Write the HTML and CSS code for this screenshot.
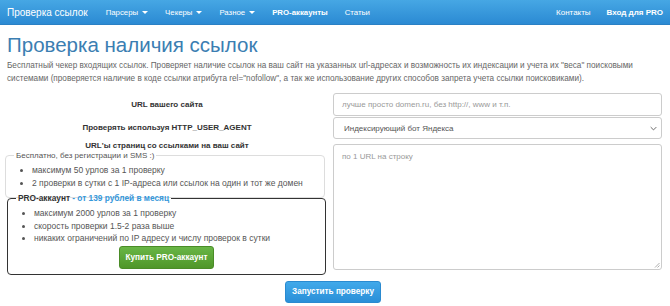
FILE: index.html
```html
<!DOCTYPE html>
<html lang="ru">
<head>
<meta charset="utf-8">
<link rel="stylesheet" href="styles.css">
</head>
<body>
<nav class="navbar">
  <div class="nav-left">
    <span class="brand">Проверка ссылок</span>
    <span class="nav-item">Парсеры <span class="caret"></span></span>
    <span class="nav-item">Чекеры <span class="caret"></span></span>
    <span class="nav-item">Разное <span class="caret"></span></span>
    <span class="nav-item bold">PRO-аккаунты</span>
    <span class="nav-item">Статьи</span>
  </div>
  <div class="nav-right">
    <span class="nav-item">Контакты</span>
    <span class="nav-item bold">Вход для PRO</span>
  </div>
</nav>
<main class="page">
  <h1 class="title">Проверка наличия ссылок</h1>
  <p class="lead">Бесплатный чекер входящих ссылок. Проверяет наличие ссылок на ваш сайт на указанных url-адресах и возможность их индексации и учета их "веса" поисковыми системами (проверяется наличие в коде ссылки атрибута rel="nofollow", а так же использование других способов запрета учета ссылки поисковиками).</p>
  <form class="form">
    <label class="lbl">URL вашего сайта</label>
    <div class="input placeholder">лучше просто domen.ru, без http://, www и т.п.</div>
    <label class="lbl">Проверять используя HTTP_USER_AGENT</label>
    <div class="input select"><span>Индексирующий бот Яндекса</span><svg class="chev" viewBox="0 0 10 6" width="7" height="5"><path d="M1 1l4 4 4-4" fill="none" stroke="#666" stroke-width="1.4"/></svg></div>
    <div class="left-stack">
      <label class="lbl lbl3">URL'ы страниц со ссылками на ваш сайт</label>
      <fieldset class="box free">
        <legend>Бесплатно, без регистрации и SMS :)</legend>
        <ul>
          <li>максимум 50 урлов за 1 проверку</li>
          <li>2 проверки в сутки с 1 IP-адреса или ссылок на один и тот же домен</li>
        </ul>
      </fieldset>
      <fieldset class="box pro">
        <legend><b>PRO-аккаунт</b> <b class="price">- от 139 рублей в месяц</b></legend>
        <ul>
          <li>максимум 2000 урлов за 1 проверку</li>
          <li>скорость проверки 1.5-2 раза выше</li>
          <li>никаких ограничений по IP адресу и числу проверок в сутки</li>
        </ul>
        <div class="center"><span class="btn green">Купить PRO-аккаунт</span></div>
      </fieldset>
    </div>
    <div class="textarea placeholder">по 1 URL на строку<svg class="grip" viewBox="0 0 6 6" width="6" height="6"><path d="M5.5 1L1 5.5M5.5 3.5L3.5 5.5" stroke="#999" stroke-width="0.8"/></svg></div>
  </form>
  <div class="submit"><span class="btn blue">Запустить проверку</span></div>
</main>
</body>
</html>
```
FILE: styles.css
```css
* { box-sizing: border-box; }
body {
  margin: 0;
  font-family: "Liberation Sans", Arial, sans-serif;
  background: #fff;
  color: #333;
}
.navbar {
  height: 25px;
  background: linear-gradient(#46a7e4, #2b8ad3);
  border-bottom: 1px solid #2a80c4;
  display: flex;
  justify-content: space-between;
  align-items: center;
  padding: 0 7px;
  color: #fff;
}
.nav-left, .nav-right { display: flex; align-items: center; }
.brand { font-size: 10px; margin-right: 18px; }
.nav-item { font-size: 7.8px; margin-right: 17px; display: flex; align-items: center; }
.nav-right .nav-item { margin-right: 0; margin-left: 16px; font-size: 8px; }
.bold { font-weight: bold; }
.caret {
  display: inline-block;
  width: 0; height: 0;
  margin-left: 4px;
  border-left: 3px solid transparent;
  border-right: 3px solid transparent;
  border-top: 3px solid #fff;
}
.page { padding: 0 8px 0 4px; }
.title {
  margin: 7px 0 0 3px;
  font-size: 20.5px;
  font-weight: normal;
  color: #3b7eb2;
  line-height: 26px;
}
.lead {
  margin: 1px 0 0 3px;
  font-size: 8.2px;
  line-height: 13px;
  color: #666;
}
.form {
  display: grid;
  grid-template-columns: 326px 1fr;
  column-gap: 3px;
  margin-top: 8px;
}
.lbl {
  font-size: 8px;
  font-weight: bold;
  color: #333;
  text-align: center;
  display: flex;
  align-items: center;
  justify-content: center;
  height: 23px;
}
.input {
  height: 23px;
  border: 1px solid #ccc;
  border-radius: 3px;
  font-size: 8px;
  padding: 0 8px;
  display: flex;
  align-items: center;
}
.placeholder { color: #999; }
.select {
  margin-top: 1px;
  height: 22px;
  color: #555;
  justify-content: space-between;
  padding-left: 10px;
  padding-right: 4px;
}
.left-stack { display: flex; flex-direction: column; }
.lbl3 { height: 12px; }
.textarea {
  margin-top: 5px;
  height: 126px;
  border: 1px solid #ccc;
  border-radius: 3px;
  font-size: 8px;
  padding: 7px 8px;
  position: relative;
}
.grip { position: absolute; right: 1px; bottom: 1px; }
.box {
  margin: 0;
  border-radius: 4px;
  padding: 0 8px 4px;
}
.box legend {
  font-size: 8px;
  padding: 0 2px;
  color: #555;
  line-height: 9px;
}
.free { border: 1px solid #ddd; margin: 0 5px 0 1px; padding-bottom: 8px; }
.pro { border: 1px solid #333; margin: -4px 4px 0 3px; padding-bottom: 5px; }
.pro legend { color: #333; font-size: 8.3px; }
.price { color: #3598db; }
.box ul {
  margin: 4px 0 0;
  padding-left: 18px;
  font-size: 8.5px;
  line-height: 12.5px;
  color: #555;
}
.center { display: flex; justify-content: center; margin-top: 1px; }
.btn {
  display: inline-flex;
  align-items: center;
  justify-content: center;
  height: 23px;
  border-radius: 3px;
  color: #fff;
  font-weight: bold;
  font-size: 8.2px;
}
.green {
  width: 95px;
  background: linear-gradient(#69b646, #4f9629);
  border: 1px solid #4a8c27;
}
.submit { display: flex; justify-content: center; margin-top: 6px; }
.blue {
  width: 96px;
  height: 22px;
  background: linear-gradient(#41a9ea, #2a8fd8);
  border: 1px solid #2a8ad0;
}
```
